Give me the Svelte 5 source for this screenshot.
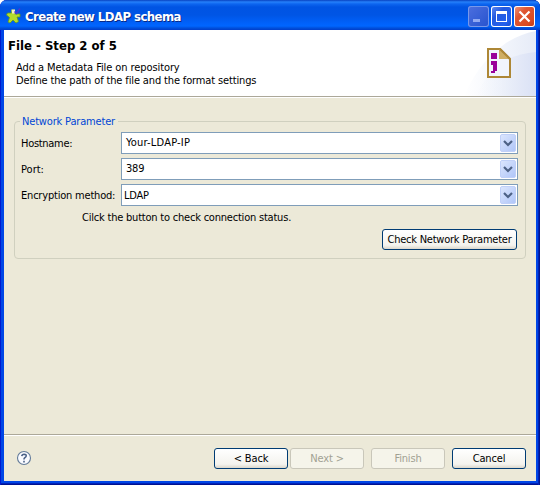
<script>
  const fields = [
    { label: 'Hostname:', value: 'Your-LDAP-IP', pad: 5 },
    { label: 'Port:', value: '389', pad: 5 },
    { label: 'Encryption method:', value: 'LDAP', pad: 2 }
  ];
</script>

<div class="window">
  <div class="titlebar">
    <svg class="app" width="16" height="16" viewBox="0 0 16 16">
      <path d="M5.5 2h3v4h5.5v3h-3l1.5 4.5-2.5 1.5-3-3-3 3-2-1 1.5-4.5-3-2.5 1-2h4z" fill="#b4dc2c" stroke="#5f9a20" stroke-width=".8" />
      <path d="M5.5 1.5h3.5v4H6z" fill="#f4efc8" />
      <path d="M8.5 3.5l2 2 3.5-5" fill="none" stroke="#4a36d0" stroke-width="1.6" />
    </svg>
    <span class="title">Create new LDAP schema</span>
    <div class="controls">
      <svg class="ctl dim" width="21" height="21" viewBox="0 0 21 21"><path d="M5 13h7v3H5z" fill="#91a9f2" /></svg>
      <svg class="ctl" width="21" height="21" viewBox="0 0 21 21"><path d="M5 5h11v11H5z M6 8h9v7H6z" fill="#fff" fill-rule="evenodd" /></svg>
      <svg class="ctl close" width="21" height="21" viewBox="0 0 21 21"><path d="M5.5 5.5l10 10M15.5 5.5l-10 10" stroke="#fff" stroke-width="2.2" /></svg>
    </div>
  </div>

  <div class="client">
    <header>
      <svg class="swoosh" width="72" height="66" viewBox="0 0 72 66">
        <defs>
          <linearGradient id="sw1" x1="0" x2="1"><stop offset="0" stop-color="#fff" /><stop offset=".5" stop-color="#f3f6fc" /><stop offset="1" stop-color="#e6ebf7" /></linearGradient>
          <linearGradient id="sw2" x1="0" x2="1"><stop offset="0" stop-color="#eef2fa" stop-opacity="0" /><stop offset="1" stop-color="#dae1f5" /></linearGradient>
        </defs>
        <path d="M0 66H72V1Q52 5 38 16Q14 34 0 66" fill="url(#sw1)" />
        <path d="M12 66H72V22Q52 24 38 32Q22 43 12 66" fill="url(#sw2)" />
      </svg>
      <div class="headtext">
        <h1>File - Step 2 of 5</h1>
        <p class="p1">Add a Metadata File on repository</p>
        <p class="p2">Define the path of the file and the format settings</p>
      </div>
      <svg class="doc" width="24" height="30" viewBox="0 0 24 30">
        <path d="M1 1H13L23 11V29H1Z" fill="#f1f5fc" stroke="#ad8736" stroke-width="2" />
        <path d="M12 1L23 11H12Z" fill="#cfae63" />
        <path d="M13 1L23 11" stroke="#ad8736" stroke-width="2" />
        <path d="M4 5h6v6H4zM4 13h6v10H8v2H4v-2h2v-6H4z" fill="#990099" />
      </svg>
    </header>

    <main>
      <fieldset>
        <legend>Network Parameter</legend>
        {#each fields as f, i}
          <div class="row">
            <span class="label l{i}">{f.label}</span>
            <div class="combo">
              <span class="v{i}" style="padding-left:{f.pad}px">{f.value}</span>
              <svg width="16" height="18" viewBox="0 0 16 18">
                <defs><linearGradient id="cb{i}" x1="0" y1="0" x2="1" y2="1"><stop offset="0" stop-color="#dce6fd" /><stop offset="1" stop-color="#afc5f8" /></linearGradient></defs>
                <rect x=".5" y=".5" width="15" height="17" rx="1.5" fill="url(#cb{i})" stroke="#c0d0f8" />
                <path d="M4 7L8 11L12 7" fill="none" stroke="#4d6185" stroke-width="2.2" />
              </svg>
            </div>
          </div>
        {/each}
        <div class="status"><span>Cilck the button to check connection status.</span></div>
        <button class="check"><span>Check Network Parameter</span></button>
      </fieldset>
    </main>

    <footer>
      <svg class="help" width="16" height="16" viewBox="0 0 16 16">
        <circle cx="8" cy="8" r="6.5" fill="#fafbff" stroke="#637b99" stroke-width="1.1" />
        <path d="M5.8 6.2Q6 4.2 8.1 4.2Q10.3 4.3 10.2 6Q10.1 7.1 8.8 7.7Q8 8.1 8 9.5M8 10.8V12.4" fill="none" stroke="#4a6187" stroke-width="1.6" />
      </svg>
      <button class="back"><span>&lt; Back</span></button>
      <button class="next" disabled><span>Next &gt;</span></button>
      <button class="finish" disabled><span>Finish</span></button>
      <button class="cancel"><span>Cancel</span></button>
    </footer>
  </div>
</div>

<style>
  :global(body) { background: #fff; overflow: hidden; }
  .window {
    box-sizing: border-box; width: 540px; height: 485px; padding: 0 4px 4px;
    display: flex; flex-direction: column; overflow: hidden;
    border-radius: 7px 7px 0 0; background: #0046e6;
    box-shadow: inset 1px 0 #0019cf, inset -1px 0 #001590, inset -2px 0 #0022b8, inset 0 -1px #001290, inset 0 -2px #0022b8;
    font-family: "DejaVu Sans Condensed", "DejaVu Sans", sans-serif; font-stretch: condensed; font-size: 11px; color: #000;
  }
  .titlebar {
    height: 30px; flex: none; margin: 0 -4px; padding: 0 5px 0 6px; box-sizing: border-box; display: flex; align-items: center;
    background: linear-gradient(#0842c0 0, #2580fa 2px, #0d65ef 4px, #0054e3 7px, #0055e5 15px, #0061fa 23px, #0066ff 26px, #0050dc 28px, #003dcb 30px);
  }
  .app { margin-top: 1px; }
  .title { flex: 1; margin: 4px 0 0 3px; font: bold 13px/16px "DejaVu Sans Condensed", sans-serif; letter-spacing: -.55px; color: #fff; text-shadow: 1px 1px #092a86; white-space: nowrap; }
  .controls { display: flex; gap: 2px; margin-top: 3px; }
  .ctl { box-sizing: border-box; border-radius: 3px; background: linear-gradient(135deg, #668ff4, #245adf 35%, #2460ed 75%, #1648c9); box-shadow: inset 0 0 0 1px #fff; }
  .dim { background: linear-gradient(135deg, #4d6fdf, #2653ce); box-shadow: inset 0 0 0 1px #7898ea; }
  .close { background: linear-gradient(135deg, #ef9a81, #df5733 35%, #d94a22 75%, #b83a15); }
  .client { flex: 1; display: flex; flex-direction: column; background: #ece9d8; }
  header { height: 66px; flex: none; background: #fff; border-bottom: 1px solid #aca899; box-shadow: 0 1px #fff; display: flex; position: relative; }
  .swoosh { position: absolute; right: 0; top: 0; }
  .headtext { position: relative; flex: 1; padding-left: 4px; }
  h1 { margin: 7px 0 0; font-size: 13px; line-height: 17px; font-weight: bold; }
  p { margin: 0 0 0 8px; line-height: 13px; white-space: nowrap; }
  .p1 { margin-top: 7px; letter-spacing: -.09px; }
  .p2 { letter-spacing: -.14px; }
  .doc { position: relative; margin: 18px 25px 0 0; }
  main { flex: 1; padding: 18px 10px 0; }
  fieldset { box-sizing: border-box; position: relative; margin: 0; width: 512px; height: 144px; padding: 4px 7px 0 6px; border: 1px solid #d0d0bf; border-radius: 4px; display: flex; flex-direction: column; min-width: 0; }
  legend { padding: 0 3px 0 2px; margin-left: -1px; color: #0046d5; line-height: 13px; height: 13px; letter-spacing: -.17px; }
  .row { height: 22px; margin-bottom: 4px; display: flex; align-items: center; }
  .label { width: 100px; white-space: nowrap; }
  .l0 { letter-spacing: -.3px; }
  .l2 { letter-spacing: -.2px; }
  .v0 { letter-spacing: .2px; margin: 0 0 2px -1px; }
  .v1 { letter-spacing: -.2px; margin: 0 0 2px -1px; }
  .v2 { letter-spacing: -.2px; }
  .combo { box-sizing: border-box; width: 397px; height: 22px; border: 1px solid #7f9db9; background: #fff; display: flex; align-items: center; justify-content: space-between; padding-right: 1px; flex: none; }
  .status { padding: 0 0 0 61px; line-height: 13px; margin-top: 1px; letter-spacing: -.21px; }
  button { box-sizing: border-box; height: 21px; padding: 0; border: 1px solid #003c74; border-radius: 3px; background: linear-gradient(#fff, #f4f3ee 80%, #dcd7cb); font: inherit; color: #000; line-height: 19px; white-space: nowrap; }
  button:disabled { border-color: #c9c7ba; background: #f5f4ea; color: #a1a192; }
  .check { width: 135px; align-self: flex-end; margin: 5px 1px 0 0; letter-spacing: -.24px; }
  footer { height: 46px; flex: none; border-top: 1px solid #aca899; box-shadow: inset 0 1px #fff; display: flex; align-items: flex-start; padding: 0 10px 0 12px; }
  footer button { width: 74px; height: 21px; margin-top: 13px; letter-spacing: -.15px; }
  .help { margin-right: auto; margin-top: 15px; }
  .next { margin-left: 2px; margin-right: 7px; }
  .cancel { margin-left: 7px; }
</style>
